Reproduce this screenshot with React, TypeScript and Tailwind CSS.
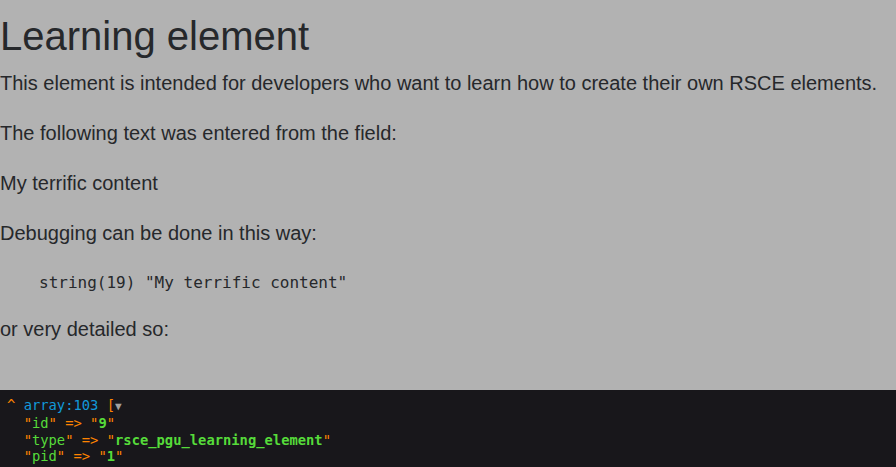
import React from "react";

const Dump = () => (
  <pre className="shrink-0 bg-[#18171b] pt-[7px] pl-[7px] pb-4 font-['DejaVu_Sans_Mono',monospace] text-[13.8px] leading-[16.4px] text-[#ff8400] overflow-hidden">
    <div>
      ^ <span className="text-[#1299da]">array:103</span> [<span className="text-[#a0a0a0] text-[11px]">▼</span>
    </div>
    <div>
      {"  "}"<span className="text-[#56db3a]">id</span>" =&gt; "<span className="text-[#56db3a] font-bold">9</span>"
    </div>
    <div>
      {"  "}"<span className="text-[#56db3a]">type</span>" =&gt; "
      <span className="text-[#56db3a] font-bold">rsce_pgu_learning_element</span>"
    </div>
    <div>
      {"  "}"<span className="text-[#56db3a]">pid</span>" =&gt; "<span className="text-[#56db3a] font-bold">1</span>"
    </div>
  </pre>
);

export default function App() {
  return (
    <div className="w-[896px] h-[467px] overflow-hidden bg-[#b2b2b2] flex flex-col font-['Liberation_Sans',Arial,sans-serif] text-[#26282b]">
      <div className="pt-[12px] h-[390px] shrink-0">
        <h1 className="text-[40px] leading-[48px] font-normal">Learning element</h1>
        <p className="mt-2 text-[20px] leading-[30px]">
          This element is intended for developers who want to learn how to create their own RSCE elements.
        </p>
        <p className="mt-5 text-[20px] leading-[30px]">The following text was entered from the field:</p>
        <p className="mt-5 text-[20px] leading-[30px]">My terrific content</p>
        <p className="mt-5 text-[20px] leading-[30px]">Debugging can be done in this way:</p>
        <pre className="mt-[22px] pl-[39px] font-['DejaVu_Sans_Mono',monospace] text-[16px] leading-[26px]">
          string(19) "My terrific content"
        </pre>
        <p className="mt-[18px] text-[20px] leading-[30px]">or very detailed so:</p>
      </div>
      <Dump />
    </div>
  );
}
